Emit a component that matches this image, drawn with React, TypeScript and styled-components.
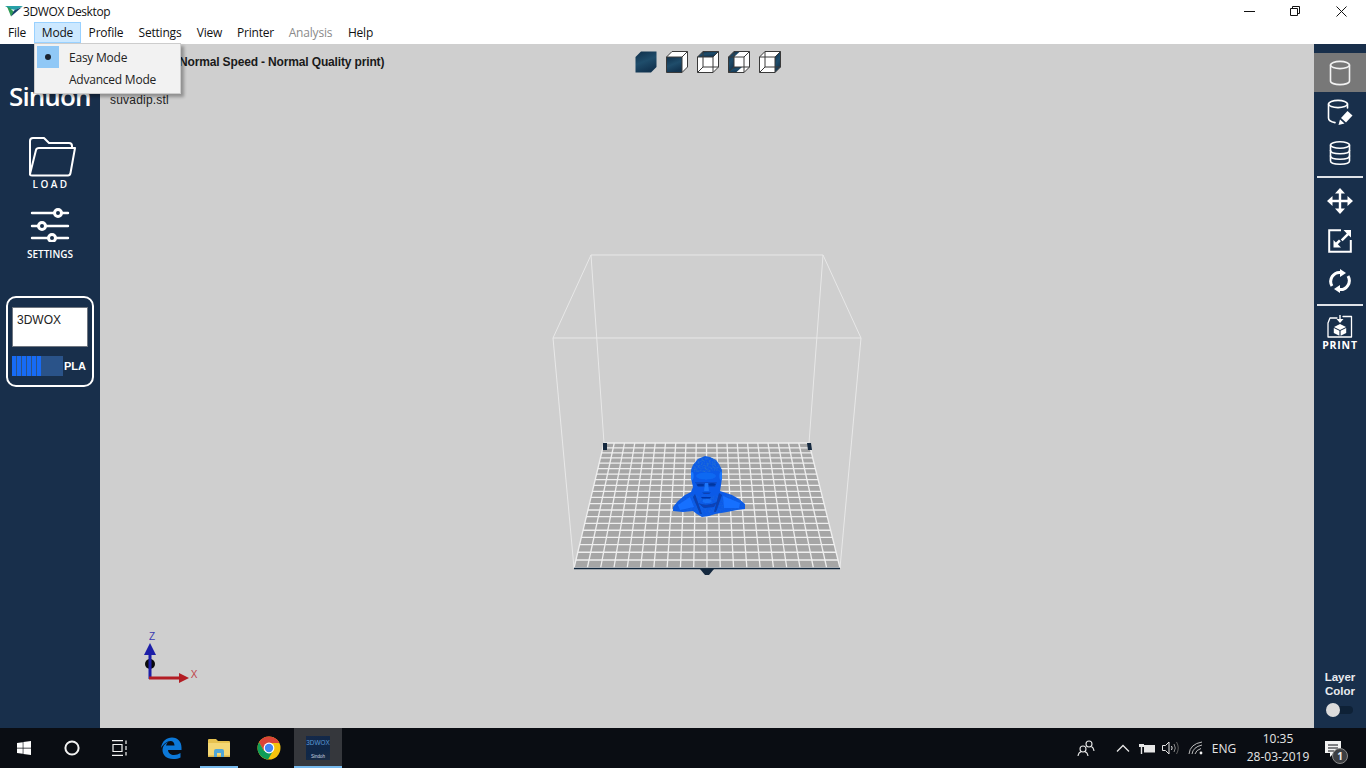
import React from "react";
import styled, { createGlobalStyle } from "styled-components";
import { FaWindows } from "react-icons/fa";

const NAVY = "#182f4b";
const UI_FONT = `"Open Sans", "Noto Sans", sans-serif`;
const ARIAL = `"Liberation Sans", Arial, sans-serif`;

const GlobalStyle = createGlobalStyle`
  html, body {
    margin: 0;
    padding: 0;
    height: 100%;
    overflow: hidden;
    background: #fff;
  }
  * { box-sizing: border-box; }
`;

const Page = styled.div`
  display: flex;
  flex-direction: column;
  width: 100%;
  height: 100vh;
  font-family: ${UI_FONT};
  color: #111;
`;

/* ---------- title bar ---------- */
const TitleBar = styled.div`
  display: flex;
  align-items: center;
  height: 22px;
  flex: none;
  padding-left: 5px;
  background: #fff;
`;

const AppTitle = styled.span`
  font-size: 12px;
  letter-spacing: -0.4px;
`;

const WindowButtons = styled.div`
  display: flex;
  margin-left: auto;
  padding-right: 2px;
`;

const WindowButton = styled.div`
  display: flex;
  align-items: center;
  justify-content: center;
  width: 46px;
  height: 22px;
`;

/* ---------- menu bar ---------- */
const MenuBar = styled.div`
  position: relative;
  z-index: 5;
  display: flex;
  height: 22px;
  flex: none;
  padding-bottom: 1px;
  background: #fff;
`;

const MenuItem = styled.div<{ $open?: boolean; $disabled?: boolean; $w: number }>`
  display: flex;
  align-items: center;
  justify-content: center;
  width: ${(p) => p.$w}px;
  font-size: 12px;
  letter-spacing: -0.2px;
  color: ${(p) => (p.$disabled ? "#8a8a8a" : "#111")};
  background: ${(p) => (p.$open ? "#cce8ff" : "transparent")};
  border: 1px solid ${(p) => (p.$open ? "#99d1ff" : "transparent")};
`;

const Dropdown = styled.div`
  position: absolute;
  top: 21px;
  left: 34px;
  width: 147px;
  height: 51px;
  padding: 2px;
  background: #f2f2f2;
  border: 1px solid #cdcdcd;
  box-shadow: 3px 3px 3px rgba(0, 0, 0, 0.3);
`;

const DropdownRow = styled.div`
  display: flex;
  align-items: center;
  height: 22px;
  font-size: 12px;
  letter-spacing: -0.23px;
  color: #222;
`;

const CheckSlot = styled.div<{ $checked?: boolean }>`
  display: flex;
  align-items: center;
  justify-content: center;
  width: 22px;
  height: 22px;
  margin-right: 10px;
  background: ${(p) => (p.$checked ? "#90c8f6" : "transparent")};
`;

const CheckDot = styled.span`
  width: 6px;
  height: 6px;
  border-radius: 50%;
  background: #1b2430;
`;

/* ---------- main area ---------- */
const Workspace = styled.div`
  display: flex;
  flex: 1;
  min-height: 0;
`;

const LeftBar = styled.aside`
  display: flex;
  flex-direction: column;
  align-items: center;
  flex: none;
  width: 100px;
  padding-top: 34px;
  background: ${NAVY};
  color: #fff;
`;

const Logo = styled.div`
  width: 100%;
  padding-left: 9px;
  height: 36px;
  line-height: 36px;
  font-size: 26px;
  font-weight: 600;
  letter-spacing: -0.9px;
  color: #fff;
`;

const SideTool = styled.div<{ $top: number }>`
  display: flex;
  flex-direction: column;
  align-items: center;
  margin-top: ${(p) => p.$top}px;
`;

const FolderWrap = styled.div`
  display: flex;
  margin-left: 4px;
`;

const LoadLabel = styled.span`
  margin-top: 2px;
  font-size: 10px;
  line-height: 10px;
  font-weight: 600;
  letter-spacing: 2.4px;
  margin-right: -2px;
`;

const SettingsLabel = styled.span`
  margin-top: 6px;
  font-size: 10px;
  line-height: 12px;
  font-weight: 600;
`;

const MaterialCard = styled.div`
  display: flex;
  flex-direction: column;
  width: 88px;
  height: 91px;
  margin-top: 36px;
  padding: 9px 4px 0;
  border: 2px solid #fff;
  border-radius: 10px;
`;

const PrinterBox = styled.div`
  height: 40px;
  padding: 5px 4px;
  background: #fff;
  border: 1px solid #6f7680;
  font-family: ${ARIAL};
  font-size: 12px;
  line-height: 14px;
  color: #222;
`;

const FilamentRow = styled.div`
  display: flex;
  align-items: center;
  margin-top: 9px;
`;

const FilamentBar = styled.div`
  display: flex;
  gap: 1px;
  width: 51px;
  height: 20px;
  background: #2a5389;
`;

const FilamentCell = styled.span`
  width: 4px;
  height: 100%;
  background: #176bf5;
`;

const FilamentName = styled.span`
  margin-left: 1px;
  font-family: ${ARIAL};
  font-size: 11px;
  font-weight: 700;
`;

const Viewport = styled.main`
  position: relative;
  flex: 1;
  min-width: 0;
  padding: 11px 10px 0;
  background: #cfcfcf;
  overflow: hidden;
`;

const Scene = styled.svg`
  position: absolute;
  left: 0;
  top: 0;
  width: 1214px;
  height: 684px;
`;

const ViewBar = styled.div`
  position: absolute;
  top: 7px;
  left: 2px;
  right: 0;
  display: flex;
  justify-content: center;
  gap: 9px;
`;

const PrintMode = styled.div`
  position: relative;
  padding-left: 9px;
  font-family: ${ARIAL};
  font-size: 12px;
  line-height: 14px;
  font-weight: 700;
  letter-spacing: -0.15px;
  color: #1a1a1a;
`;

const FileName = styled.div`
  position: relative;
  margin-top: 24px;
  font-family: ${ARIAL};
  font-size: 12px;
  line-height: 14px;
  letter-spacing: 0.2px;
  color: #222;
`;

const RightBar = styled.aside`
  display: flex;
  flex-direction: column;
  align-items: center;
  flex: none;
  width: 52px;
  padding-top: 9px;
  background: ${NAVY};
  color: #fff;
`;

const RightTool = styled.div<{ $active?: boolean; $h?: number }>`
  display: flex;
  align-items: center;
  justify-content: center;
  width: 100%;
  height: ${(p) => p.$h ?? 40}px;
  background: ${(p) => (p.$active ? "#787878" : "transparent")};
`;

const RightDivider = styled.hr`
  width: 46px;
  height: 2px;
  margin: 3px 0;
  border: 0;
  background: #dfe3e8;
`;

const PrintTool = styled.div`
  display: flex;
  flex-direction: column;
  align-items: center;
  margin-top: 6px;
`;

const PrintLabel = styled.span`
  margin-top: 1px;
  font-size: 10.5px;
  line-height: 12px;
  font-weight: 700;
  letter-spacing: 0.8px;
`;

const LayerColor = styled.div`
  display: flex;
  flex-direction: column;
  align-items: center;
  margin-top: auto;
  padding-bottom: 14px;
  font-family: ${ARIAL};
  font-size: 11.5px;
  line-height: 14px;
  font-weight: 700;
  color: #e8ebef;
  text-align: center;
`;

const ToggleTrack = styled.div`
  position: relative;
  width: 26px;
  height: 8px;
  margin-top: 8px;
  border-radius: 4px;
  background: #0e2136;
`;

const ToggleKnob = styled.span`
  position: absolute;
  left: -1px;
  top: -3px;
  width: 14px;
  height: 14px;
  border-radius: 50%;
  background: #dcdcdc;
`;

/* ---------- taskbar ---------- */
const Taskbar = styled.footer`
  display: flex;
  align-items: stretch;
  flex: none;
  height: 40px;
  background: #0a0d13;
  color: #e6e6e6;
`;

const TaskButton = styled.div<{ $active?: boolean; $running?: boolean; $gap?: number }>`
  position: relative;
  display: flex;
  align-items: center;
  justify-content: center;
  width: 48px;
  margin-left: ${(p) => p.$gap ?? 0}px;
  background: ${(p) => (p.$active ? "#35373c" : "transparent")};

  &::after {
    content: "";
    position: absolute;
    bottom: 0;
    left: ${(p) => (p.$running ? 5 : 0)}px;
    right: ${(p) => (p.$running ? 5 : 0)}px;
    height: 2px;
    background: ${(p) => (p.$active || p.$running ? "#76b9ed" : "transparent")};
  }
`;

const AppThumb = styled.div`
  display: flex;
  flex-direction: column;
  align-items: center;
  justify-content: space-between;
  width: 24px;
  height: 24px;
  padding: 3px 0 1px;
  background: linear-gradient(160deg, #15294a, #0f2747 60%, #1b2c44);
  font-family: ${ARIAL};
  font-size: 6.4px;
  line-height: 7px;
  color: #5a9ad6;
`;

const ThumbMaker = styled.span`
  color: #c9d4e0;
  font-size: 4.5px;
  line-height: 5px;
`;

const Tray = styled.div`
  display: flex;
  align-items: center;
  margin-left: auto;
`;

const TraySlot = styled.div<{ $w: number }>`
  position: relative;
  display: flex;
  align-items: center;
  justify-content: center;
  width: ${(p) => p.$w}px;
  height: 100%;
  font-size: 12px;
`;

const Clock = styled.div`
  display: flex;
  flex-direction: column;
  align-items: center;
  width: 80px;
  font-size: 12px;
  line-height: 18px;
  color: #e6e6e6;
`;

const NotifySlot = styled.div`
  position: relative;
  width: 47px;
  height: 100%;
  padding: 12px 0 0 7px;
`;

const NotifyBadge = styled.span`
  position: absolute;
  left: 14px;
  top: 20px;
  display: flex;
  align-items: center;
  justify-content: center;
  width: 16px;
  height: 16px;
  border-radius: 50%;
  background: #3c3e42;
  border: 1px solid #8a8a8a;
  font-size: 10px;
  font-weight: 700;
  color: #eee;
`;

/* ---------- drawings ---------- */
function AppMark() {
  return (
    <svg width="18" height="12" viewBox="0 0 18 12">
      <path d="M0 1 L18 1 L11 5 L5 4 Z" fill="#27a0a8" />
      <path d="M2 1.5 L6 11.5 L9 7 L5 3 Z" fill="#2f9a55" />
      <path d="M6 11.5 L17 2 L9 5.5 Z" fill="#15406e" />
    </svg>
  );
}

type CubeFace = "all" | "front" | "top" | "left" | "right";

function CubeIcon({ face }: { face: CubeFace }) {
  const id = `cube-${face}`;
  const fill = `url(#${id})`;
  return (
    <svg width="22" height="22" viewBox="0 0 22 22">
      <defs>
        <linearGradient id={id} x1="0" y1="0" x2="0.4" y2="1">
          <stop offset="0" stopColor="#0f2f4a" />
          <stop offset="0.55" stopColor="#1f4d6b" />
          <stop offset="1" stopColor="#123450" />
        </linearGradient>
      </defs>
      <polygon points="6,0.5 21.5,0.5 21.5,16 16,21.5 0.5,21.5 0.5,6" fill={face === "all" ? fill : "#fff"} />
      {face === "front" && <rect x="0.5" y="6" width="15.5" height="15.5" fill={fill} />}
      {face === "top" && <polygon points="0.5,6 6,0.5 21.5,0.5 16,6" fill={fill} />}
      {face === "left" && (
        <>
          <polygon points="0.5,6 6,0.5 6,16 0.5,21.5" fill={fill} />
          <polygon points="6,0.5 12,0.5 6,6" fill={fill} />
          <polygon points="0.5,21.5 6,16 14,16 8,21.5" fill={fill} />
        </>
      )}
      {face === "right" && <polygon points="16,6 21.5,0.5 21.5,16 16,21.5" fill={fill} />}
      {face !== "all" && (
        <g fill="none" stroke="#3a3a3a" strokeWidth="1">
          <polygon points="6,0.5 21.5,0.5 21.5,16 16,21.5 0.5,21.5 0.5,6" />
          <path d="M0.5 6 H16 V21.5 M16 6 L21.5 0.5" />
          {face !== "front" && <path d="M6 0.5 V16 H21.5 M6 16 L0.5 21.5" />}
        </g>
      )}
    </svg>
  );
}

const stroke = { fill: "none", stroke: "#fff", strokeWidth: 1.6, strokeLinecap: "round", strokeLinejoin: "round" } as const;

function FolderIcon() {
  return (
    <svg width="48" height="41" viewBox="0 0 48 41">
      <path {...stroke} strokeWidth={2} d="M2 38 V5 Q2 2 5 2 H16 L21 7 H41 Q44 7 44 10 V12" />
      <path {...stroke} strokeWidth={2} d="M2 38 Q2 39.5 4 39.5 H40 Q42 39.5 42.5 37 L47 12 H11 Q8.5 12 8 14 L2 38 Z" />
    </svg>
  );
}

function SlidersIcon() {
  return (
    <svg width="40" height="34" viewBox="0 0 40 34">
      <g {...stroke} strokeWidth={2.4}>
        <path d="M2 5 H24 M32 5 H38 M2 18 H8 M16 18 H38 M2 30 H18 M26 30 H38" />
      </g>
      <g fill="none" stroke="#fff" strokeWidth="3">
        <circle cx="28" cy="5" r="3.5" />
        <circle cx="12" cy="18" r="3.5" />
        <circle cx="22" cy="30" r="3.5" />
      </g>
    </svg>
  );
}

function CylinderIcon() {
  return (
    <svg width="22" height="26" viewBox="0 0 22 26">
      <g {...stroke} stroke="#f2f2f2">
        <ellipse cx="11" cy="5" rx="9.5" ry="3.6" />
        <path d="M1.5 5 V21 C1.5 23.2 6 24.6 11 24.6 S20.5 23.2 20.5 21 V5" />
      </g>
    </svg>
  );
}

function CylinderEditIcon() {
  return (
    <svg width="26" height="28" viewBox="0 0 26 28">
      <g {...stroke}>
        <ellipse cx="11" cy="5" rx="9.5" ry="3.6" />
        <path d="M1.5 5 V19 C1.5 21.5 4.5 23 8 23.6 M20.5 5 V9" />
      </g>
      <path d="M14 19 L20.5 12 L25.5 16.5 L19 23.5 Z" fill="#fff" />
      <path d="M13 20.5 L17.5 24.5 L11.5 26 Z" fill="#fff" />
    </svg>
  );
}

function DatabaseIcon() {
  return (
    <svg width="22" height="24" viewBox="0 0 22 24">
      <g {...stroke}>
        <ellipse cx="11" cy="4" rx="9.5" ry="3.2" />
        <path d="M1.5 4 V20 C1.5 22 6 23.2 11 23.2 S20.5 22 20.5 20 V4" />
        <path d="M1.5 9.5 C1.5 11.5 6 12.7 11 12.7 S20.5 11.5 20.5 9.5" />
        <path d="M1.5 15 C1.5 17 6 18.2 11 18.2 S20.5 17 20.5 15" />
      </g>
    </svg>
  );
}

function MoveIcon() {
  return (
    <svg width="26" height="26" viewBox="0 0 26 26">
      <path d="M13 2 V24 M2 13 H24" stroke="#fff" strokeWidth="2.4" fill="none" />
      <path d="M13 0 L18 5.5 H8 Z M13 26 L18 20.5 H8 Z M0 13 L5.5 8 V18 Z M26 13 L20.5 8 V18 Z" fill="#fff" />
    </svg>
  );
}

function ResizeIcon() {
  return (
    <svg width="24" height="24" viewBox="0 0 24 24">
      <path d="M13 1.2 H1.2 V22.8 H22.8 V11" {...stroke} strokeWidth={2} strokeLinecap="butt" strokeLinejoin="miter" />
      <path d="M15.5 1 H23 V8.5 L20.6 6.2 L14.6 12.2 L12.8 10.4 L18.8 4.4 Z" fill="#fff" />
      <path d="M5.5 18.5 V11 L7.9 13.4 L11 10.4 L12.8 12.2 L9.8 15.3 L13 18.5 Z" fill="#fff" />
    </svg>
  );
}

function RotateIcon() {
  return (
    <svg width="22" height="24" viewBox="0 0 22 24">
      <path d="M3 17 A 9 9 0 0 1 12 3.5" fill="none" stroke="#fff" strokeWidth="3" />
      <path d="M19 7 A 9 9 0 0 1 10 20.5" fill="none" stroke="#fff" strokeWidth="3" />
      <path d="M11 0 L17 4 L11 8 Z M11 16 L5 20 L11 24 Z" fill="#fff" />
    </svg>
  );
}

function PrintIcon() {
  return (
    <svg width="26" height="23" viewBox="0 0 26 23">
      <path {...stroke} strokeWidth={1.3} d="M10 3 H3 L1 8 V22 H24.5 V1.5 H16" />
      <path d="M13 0 V5" stroke="#fff" strokeWidth="1.4" />
      <path d="M9.5 4 H16.5 L13 8 Z" fill="#fff" />
      <path d="M13 9 L19 12 L13 15 L7 12 Z" fill="#fff" />
      <path d="M6.8 13 L12.4 15.8 V20.8 L6.8 18 Z M19.2 13 L13.6 15.8 V20.8 L19.2 18 Z" fill="#fff" />
    </svg>
  );
}

function PlateGrid() {
  const count = 20;
  const topY = 443;
  const botY = 568;
  const top = [604, 809];
  const bot = [574, 840];
  const ratio = (top[1] - top[0]) / (bot[1] - bot[0]);
  // t runs from the back edge to the front edge, foreshortened by the perspective
  const depth = (i: number) => {
    const s = i / count;
    return (s * ratio) / (1 - s + s * ratio);
  };
  const rows = Array.from({ length: count + 1 }, (_, i) => {
    const t = depth(i);
    return {
      y: topY + (botY - topY) * t,
      l: top[0] + (bot[0] - top[0]) * t,
      r: top[1] + (bot[1] - top[1]) * t,
    };
  });
  const cols = Array.from({ length: count + 1 }, (_, i) => {
    const s = i / count;
    return { a: top[0] + (top[1] - top[0]) * s, b: bot[0] + (bot[1] - bot[0]) * s };
  });
  return (
    <g>
      <polygon points="604,443 809,443 840,568 574,568" fill="#a6a6a6" />
      <g stroke="#efefef" strokeWidth="1.3">
        {rows.map((r) => (
          <line key={r.y} x1={r.l} y1={r.y} x2={r.r} y2={r.y} />
        ))}
        {cols.map((c) => (
          <line key={c.a} x1={c.a} y1={topY} x2={c.b} y2={botY} />
        ))}
      </g>
    </g>
  );
}

function Bust() {
  const outline =
    "M705 456 L710 457 L716 460 L719 464 L722 470 L722 478 L721 485 L720 491 L726 493 L732 495 L739 499 L745 504 L745 509 L737 510 L727 512 L715 514 L709 516 L702 517 L697 514 L693 511 L683 512 L673 511 L673 507 L678 501 L685 495 L691 492 L693 487 L691 478 L691 470 L693 465 L698 459 Z";
  return (
    <g>
      <defs>
        <filter id="bust-noise" x="0" y="0" width="100%" height="100%">
          <feTurbulence type="fractalNoise" baseFrequency="0.55" numOctaves="2" seed="7" />
          <feColorMatrix values="0 0 0 0 0.02  0 0 0 0 0.17  0 0 0 0 0.62  1.9 0 0 0 -0.72" />
        </filter>
        <filter id="bust-soft">
          <feGaussianBlur stdDeviation="0.55" />
        </filter>
        <clipPath id="bust-clip">
          <path d={outline} />
        </clipPath>
      </defs>
      <path d={outline} fill="#0b5ae8" />
      <g clipPath="url(#bust-clip)">
        <rect x="670" y="454" width="78" height="18" filter="url(#bust-noise)" />
        <rect x="670" y="495" width="78" height="24" filter="url(#bust-noise)" opacity="0.45" />
        <g filter="url(#bust-soft)">
          <ellipse cx="706" cy="476" rx="10" ry="3.5" fill="#1169f2" />
          <ellipse cx="692" cy="476" rx="1.6" ry="4" fill="#1a78ff" />
          <ellipse cx="721" cy="476" rx="1.6" ry="4" fill="#1a78ff" />
          <path d="M695 482 H717 L715 487 H698 Z" fill="#0a4cc8" />
          <ellipse cx="700.5" cy="485" rx="3.6" ry="1.3" fill="#0534a0" />
          <ellipse cx="712" cy="484.5" rx="3.6" ry="1.3" fill="#0534a0" />
          <path d="M705 483 L704 491 H709 L708 483 Z" fill="#1a76fa" />
          <path d="M702 492.5 H711 L709 494 H704 Z" fill="#0840b4" />
          <path d="M701 497 H711 L710 498.5 H702 Z" fill="#0636a6" />
          <ellipse cx="707" cy="501" rx="4.5" ry="2" fill="#156ef4" />
          <path d="M698 503 Q707 507 717 502 L714 507 L704 508 Z" fill="#0842b6" />
          <path d="M695 494 L702 514 L700 514 L693 497 Z" fill="#0840b0" />
          <path d="M719 493 L714 512 L716 512 L722 495 Z" fill="#0840b0" />
          <path d="M678 505 L690 497 L694 507 L680 510 Z" fill="#1670ff" />
          <path d="M723 496 L740 503 L739 508 L724 508 Z" fill="#1670ff" />
        </g>
      </g>
    </g>
  );
}

function SceneDrawing() {
  return (
    <Scene viewBox="100 44 1214 684">
      <PlateGrid />
      <g fill="none" stroke="#e8e8e8" strokeWidth="1">
        <path d="M591 255 H823 L861 338 L840 568 M591 255 L553 338 L574 568 M591 255 L604 443 M823 255 L809 443" />
        <path d="M553 338 H861" />
      </g>
      <line x1="574" y1="568.5" x2="840" y2="568.5" stroke="#10263c" strokeWidth="1.6" />
      <path d="M700 569 H714 L709 575 H705 Z" fill="#15293f" />
      <path d="M603 443 H607 L607 450 H603 Z M807 443 H811 L812 450 H808 Z" fill="#15293f" />
      <Bust />
      <circle cx="150" cy="664" r="5" fill="#0b0b0b" />
      <rect x="148.5" y="652" width="3" height="27" fill="#1d1fa8" />
      <path d="M150 643 L156 655 H144 Z" fill="#1d1fa8" />
      <rect x="149" y="676.5" width="32" height="3" fill="#b31d24" />
      <path d="M189 678 L179 673 V683 Z" fill="#b31d24" />
      <text x="152" y="640" fontFamily={ARIAL} fontSize="10" fill="#3a3ab0" textAnchor="middle">Z</text>
      <text x="194" y="678" fontFamily={ARIAL} fontSize="10" fill="#c0444a" textAnchor="middle">X</text>
    </Scene>
  );
}

function EdgeIcon() {
  return (
    <svg width="22" height="23" viewBox="0 0 22 23">
      <path
        d="M1 11 C2 4 6.5 0.5 12 0.5 C18 0.5 21.5 5 21.5 10.5 V13 H8 C8.3 16.5 11 18 14 18 C16.5 18 18.5 17.3 20.5 16 V20.5 C18.5 21.5 16 22 13 22 C6.5 22 2.5 18 2.5 13 C2.5 9.5 4.5 6.5 8 5 C7 6 6.3 7.2 6 8.5 H14.5 C14.5 6 13 4 10.5 4 C7 4 3.5 7 1 11 Z"
        fill="#0c78d8"
      />
    </svg>
  );
}

function ChromeIcon() {
  return (
    <svg width="24" height="24" viewBox="0 0 24 24">
      <circle cx="12" cy="12" r="11.5" fill="#f4c20d" />
      <path d="M12 .5 A11.5 11.5 0 0 0 2 6.3 L7 15 L12 7 H22.4 A11.5 11.5 0 0 0 12 .5 Z" fill="#db4437" />
      <path d="M2 6.3 A11.5 11.5 0 0 0 11 23.4 L16 15 H7 Z" fill="#0f9d58" />
      <circle cx="12" cy="12" r="5.4" fill="#fff" />
      <circle cx="12" cy="12" r="4.2" fill="#4285f4" />
    </svg>
  );
}

function ExplorerIcon() {
  return (
    <svg width="24" height="20" viewBox="0 0 24 20">
      <path d="M1 2 Q1 1 2 1 H9 L11 3 H22 Q23 3 23 4 V7 H1 Z" fill="#e6c14f" />
      <rect x="1" y="5" width="22" height="14" fill="#f4d774" />
      <rect x="1" y="17.5" width="22" height="1.5" fill="#d9b44a" />
      <path d="M7 19 V13 Q7 11 9 11 H15 Q17 11 17 13 V19 H14 V15 H10 V19 Z" fill="#4fa6d8" />
    </svg>
  );
}

function App() {
  const menus = [
    { label: "File", w: 34 },
    { label: "Mode", w: 47, open: true },
    { label: "Profile", w: 50 },
    { label: "Settings", w: 58 },
    { label: "View", w: 41 },
    { label: "Printer", w: 51 },
    { label: "Analysis", w: 59, disabled: true },
    { label: "Help", w: 41 },
  ];
  const cubes: CubeFace[] = ["all", "front", "top", "left", "right"];

  return (
    <Page>
      <GlobalStyle />
      <TitleBar>
        <AppMark />
        <AppTitle>3DWOX Desktop</AppTitle>
        <WindowButtons>
          <WindowButton>
            <svg width="11" height="1"><rect width="11" height="1" fill="#111" /></svg>
          </WindowButton>
          <WindowButton>
            <svg width="10" height="10" viewBox="0 0 10 10" fill="none" stroke="#111">
              <path d="M.5 2.5 H7.5 V9.5 H.5 Z M2.5 2.5 V.5 H9.5 V7.5 H7.5" />
            </svg>
          </WindowButton>
          <WindowButton>
            <svg width="11" height="11" viewBox="0 0 11 11" stroke="#111">
              <path d="M.5 .5 L10.5 10.5 M10.5 .5 L.5 10.5" />
            </svg>
          </WindowButton>
        </WindowButtons>
      </TitleBar>

      <MenuBar>
        {menus.map((m) => (
          <MenuItem key={m.label} $w={m.w} $open={m.open} $disabled={m.disabled}>
            {m.label}
          </MenuItem>
        ))}
        <Dropdown>
          <DropdownRow>
            <CheckSlot $checked><CheckDot /></CheckSlot>
            Easy Mode
          </DropdownRow>
          <DropdownRow>
            <CheckSlot />
            Advanced Mode
          </DropdownRow>
        </Dropdown>
      </MenuBar>

      <Workspace>
        <LeftBar>
          <Logo>Sinuon</Logo>
          <SideTool $top={22}>
            <FolderWrap><FolderIcon /></FolderWrap>
            <LoadLabel>LOAD</LoadLabel>
          </SideTool>
          <SideTool $top={19}>
            <SlidersIcon />
            <SettingsLabel>SETTINGS</SettingsLabel>
          </SideTool>
          <MaterialCard>
            <PrinterBox>3DWOX</PrinterBox>
            <FilamentRow>
              <FilamentBar>
                {[0, 1, 2, 3, 4, 5].map((i) => (
                  <FilamentCell key={i} />
                ))}
              </FilamentBar>
              <FilamentName>PLA</FilamentName>
            </FilamentRow>
          </MaterialCard>
        </LeftBar>

        <Viewport>
          <SceneDrawing />
          <ViewBar>
            {cubes.map((c) => (
              <CubeIcon key={c} face={c} />
            ))}
          </ViewBar>
          <PrintMode>3DWOX 1 (Normal Speed - Normal Quality print)</PrintMode>
          <FileName>suvadip.stl</FileName>
        </Viewport>

        <RightBar>
          <RightTool $active $h={39}><CylinderIcon /></RightTool>
          <RightTool $h={41}><CylinderEditIcon /></RightTool>
          <RightTool><DatabaseIcon /></RightTool>
          <RightDivider />
          <RightTool><MoveIcon /></RightTool>
          <RightTool><ResizeIcon /></RightTool>
          <RightTool><RotateIcon /></RightTool>
          <RightDivider />
          <PrintTool>
            <PrintIcon />
            <PrintLabel>PRINT</PrintLabel>
          </PrintTool>
          <LayerColor>
            Layer
            <br />
            Color
            <ToggleTrack><ToggleKnob /></ToggleTrack>
          </LayerColor>
        </RightBar>
      </Workspace>

      <Taskbar>
        <TaskButton><FaWindows size={16} color="#fff" /></TaskButton>
        <TaskButton>
          <svg width="16" height="16" viewBox="0 0 16 16">
            <circle cx="8" cy="8" r="6.6" fill="none" stroke="#f2f2f2" strokeWidth="2" />
          </svg>
        </TaskButton>
        <TaskButton>
          <svg width="18" height="16" viewBox="0 0 18 16" fill="none" stroke="#f2f2f2" strokeWidth="1.2">
            <path d="M1 .6 H12 M1 15.4 H12 M2 4.5 H11 V11.5 H2 Z M15 .6 V4 M15 6 V10 M15 12 V15.4" />
          </svg>
        </TaskButton>
        <TaskButton $gap={3}><EdgeIcon /></TaskButton>
        <TaskButton $running><ExplorerIcon /></TaskButton>
        <TaskButton $gap={2}><ChromeIcon /></TaskButton>
        <TaskButton $active $gap={1}>
          <AppThumb>
            3DWOX
            <ThumbMaker>Sindoh</ThumbMaker>
          </AppThumb>
        </TaskButton>
        <Tray>
          <TraySlot $w={30}>
            <svg width="18" height="17" viewBox="0 0 18 17" fill="none" stroke="#e6e6e6" strokeWidth="1.1">
              <circle cx="6" cy="9" r="3" />
              <path d="M1 16 Q1.5 12.5 4 11.8 M8 11.8 Q10.5 12.5 11 16" />
              <circle cx="12" cy="4" r="3" />
              <path d="M14.5 6.8 Q16.5 7.5 17 11" />
            </svg>
          </TraySlot>
          <TraySlot $w={9} />
          <TraySlot $w={26}>
            <svg width="14" height="8" viewBox="0 0 14 8" fill="none" stroke="#e6e6e6" strokeWidth="1.3">
              <path d="M1 7.5 L7 1.5 L13 7.5" />
            </svg>
          </TraySlot>
          <TraySlot $w={22}>
            <svg width="17" height="12" viewBox="0 0 17 12">
              <path d="M1 0 V2 M4 0 V2 M0 2 H5 V5 H3.2 V12 H1.8 V5 H0 Z" fill="#e6e6e6" />
              <rect x="5" y="3" width="11" height="7.5" fill="#e6e6e6" />
            </svg>
          </TraySlot>
          <TraySlot $w={24}>
            <svg width="17" height="14" viewBox="0 0 17 14" fill="none" stroke="#e6e6e6" strokeWidth="1">
              <path d="M.5 4.5 H3.5 L7 1 V13 L3.5 9.5 H.5 Z" />
              <path d="M9.5 5 Q10.8 7 9.5 9" />
              <path d="M12 3 Q14.6 7 12 11" stroke="#8c8c8c" />
              <path d="M14.5 1 Q18 7 14.5 13" stroke="#5e5e5e" />
            </svg>
          </TraySlot>
          <TraySlot $w={28}>
            <svg width="16" height="14" viewBox="0 0 16 14" fill="none" stroke="#bdbdbd" strokeWidth="1">
              <path d="M1 13 Q2 3 14 1" />
              <path d="M4 13 Q5 6 14 4" />
              <path d="M7 13 Q8 9 13 7.5" />
              <circle cx="13" cy="12" r="1.4" fill="#f2f2f2" stroke="none" />
            </svg>
          </TraySlot>
          <TraySlot $w={28}>ENG</TraySlot>
          <Clock>
            <span>10:35</span>
            <span>28-03-2019</span>
          </Clock>
          <NotifySlot>
            <svg width="17" height="16" viewBox="0 0 17 16">
              <path d="M0 0 H16 V12 H9 L5 16 V12 H0 Z" fill="#f2f2f2" />
              <path d="M3 4 H13 M3 7 H13 M3 10 H9" stroke="#0a0d13" strokeWidth="1" />
            </svg>
            <NotifyBadge>1</NotifyBadge>
          </NotifySlot>
          <TraySlot $w={1} />
        </Tray>
      </Taskbar>
    </Page>
  );
}

export default App;
